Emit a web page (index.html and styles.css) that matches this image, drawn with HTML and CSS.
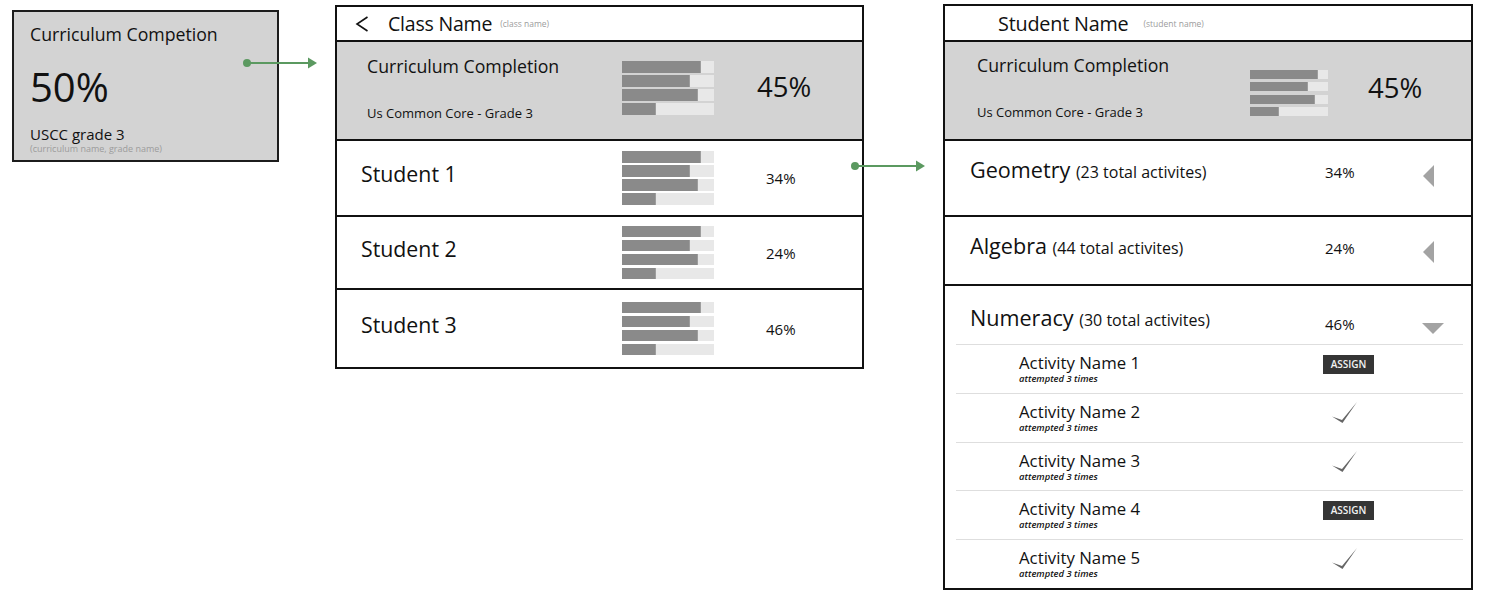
FILE: index.html
```html
<!DOCTYPE html>
<html lang="en">
<head>
<meta charset="utf-8">
<title>Curriculum Completion</title>
<link rel="stylesheet" href="styles.css">
</head>
<body>
<main class="board">

  <section class="summary-card">
    <h2 class="summary-card__title">Curriculum Competion</h2>
    <div class="summary-card__value">50%</div>
    <div class="summary-card__name">USCC grade 3</div>
    <div class="hint hint--card">(curriculum name, grade name)</div>
  </section>

  <section class="panel panel--class">
    <header class="panel__head panel__head--class">
      <svg class="back" width="14" height="16" viewBox="0 0 14 16" aria-hidden="true">
        <polyline points="12.5,1 2,8 12.5,15" fill="none" stroke="#111" stroke-width="1.6"/>
      </svg>
      <span class="panel__title">Class Name</span>
      <span class="hint">(class name)</span>
    </header>

    <div class="overview overview--class">
      <div class="overview__text">
        <div class="overview__title">Curriculum Completion</div>
        <div class="overview__sub">Us Common Core - Grade 3</div>
      </div>
      <div class="bars">
        <div class="bars__track"><div class="bars__fill" style="width:86%"></div></div>
        <div class="bars__track"><div class="bars__fill" style="width:74%"></div></div>
        <div class="bars__track"><div class="bars__fill" style="width:83%"></div></div>
        <div class="bars__track"><div class="bars__fill" style="width:37%"></div></div>
      </div>
      <div class="overview__pct">45%</div>
    </div>

    <div class="student">
      <div class="student__name">Student 1</div>
      <div class="bars">
        <div class="bars__track"><div class="bars__fill" style="width:86%"></div></div>
        <div class="bars__track"><div class="bars__fill" style="width:74%"></div></div>
        <div class="bars__track"><div class="bars__fill" style="width:83%"></div></div>
        <div class="bars__track"><div class="bars__fill" style="width:37%"></div></div>
      </div>
      <div class="student__pct">34%</div>
    </div>

    <div class="student">
      <div class="student__name">Student 2</div>
      <div class="bars">
        <div class="bars__track"><div class="bars__fill" style="width:86%"></div></div>
        <div class="bars__track"><div class="bars__fill" style="width:74%"></div></div>
        <div class="bars__track"><div class="bars__fill" style="width:83%"></div></div>
        <div class="bars__track"><div class="bars__fill" style="width:37%"></div></div>
      </div>
      <div class="student__pct">24%</div>
    </div>

    <div class="student">
      <div class="student__name">Student 3</div>
      <div class="bars">
        <div class="bars__track"><div class="bars__fill" style="width:86%"></div></div>
        <div class="bars__track"><div class="bars__fill" style="width:74%"></div></div>
        <div class="bars__track"><div class="bars__fill" style="width:83%"></div></div>
        <div class="bars__track"><div class="bars__fill" style="width:37%"></div></div>
      </div>
      <div class="student__pct">46%</div>
    </div>
  </section>

  <section class="panel panel--student">
    <header class="panel__head panel__head--student">
      <span class="panel__title">Student Name</span>
      <span class="hint">(student name)</span>
    </header>

    <div class="overview overview--student">
      <div class="overview__text">
        <div class="overview__title">Curriculum Completion</div>
        <div class="overview__sub">Us Common Core - Grade 3</div>
      </div>
      <div class="bars bars--small">
        <div class="bars__track"><div class="bars__fill" style="width:87%"></div></div>
        <div class="bars__track"><div class="bars__fill" style="width:74%"></div></div>
        <div class="bars__track"><div class="bars__fill" style="width:83%"></div></div>
        <div class="bars__track"><div class="bars__fill" style="width:37%"></div></div>
      </div>
      <div class="overview__pct">45%</div>
    </div>

    <div class="topic">
      <div class="topic__head">
        <div class="topic__name">Geometry <span class="topic__count">(23 total activites)</span></div>
        <div class="topic__pct">34%</div>
        <svg class="topic__toggle" width="11" height="22" viewBox="0 0 11 22" aria-hidden="true">
          <polygon points="11,0 11,22 0,11" fill="#a3a3a3"/>
        </svg>
      </div>
    </div>

    <div class="topic">
      <div class="topic__head">
        <div class="topic__name">Algebra <span class="topic__count">(44 total activites)</span></div>
        <div class="topic__pct">24%</div>
        <svg class="topic__toggle" width="11" height="22" viewBox="0 0 11 22" aria-hidden="true">
          <polygon points="11,0 11,22 0,11" fill="#a3a3a3"/>
        </svg>
      </div>
    </div>

    <div class="topic topic--open">
      <div class="topic__head">
        <div class="topic__name">Numeracy <span class="topic__count">(30 total activites)</span></div>
        <div class="topic__pct">46%</div>
        <svg class="topic__toggle" width="22" height="11" viewBox="0 0 22 11" aria-hidden="true">
          <polygon points="0,0 22,0 11,11" fill="#a3a3a3"/>
        </svg>
      </div>

      <ul class="activities">
        <li class="activity">
          <div>
            <div class="activity__name">Activity Name 1</div>
            <div class="activity__meta">attempted 3 times</div>
          </div>
          <button class="assign" type="button">ASSIGN</button>
        </li>
        <li class="activity">
          <div>
            <div class="activity__name">Activity Name 2</div>
            <div class="activity__meta">attempted 3 times</div>
          </div>
          <svg class="done" width="26" height="22" viewBox="0 0 26 22" aria-hidden="true">
            <path d="M0 14.5 L10 18 L25 0 L10.5 21 Z" fill="#666"/>
          </svg>
        </li>
        <li class="activity">
          <div>
            <div class="activity__name">Activity Name 3</div>
            <div class="activity__meta">attempted 3 times</div>
          </div>
          <svg class="done" width="26" height="22" viewBox="0 0 26 22" aria-hidden="true">
            <path d="M0 14.5 L10 18 L25 0 L10.5 21 Z" fill="#666"/>
          </svg>
        </li>
        <li class="activity">
          <div>
            <div class="activity__name">Activity Name 4</div>
            <div class="activity__meta">attempted 3 times</div>
          </div>
          <button class="assign" type="button">ASSIGN</button>
        </li>
        <li class="activity">
          <div>
            <div class="activity__name">Activity Name 5</div>
            <div class="activity__meta">attempted 3 times</div>
          </div>
          <svg class="done" width="26" height="22" viewBox="0 0 26 22" aria-hidden="true">
            <path d="M0 14.5 L10 18 L25 0 L10.5 21 Z" fill="#666"/>
          </svg>
        </li>
      </ul>
    </div>
  </section>

  <!-- flow connectors between screens -->
  <svg class="link link--card" width="80" height="14" viewBox="0 0 80 14" aria-hidden="true">
    <circle cx="7" cy="7" r="4" fill="#5b9960"/>
    <line x1="7" y1="7" x2="70" y2="7" stroke="#5b9960" stroke-width="2"/>
    <polygon points="68,1.5 77,7 68,12.5" fill="#5b9960"/>
  </svg>
  <svg class="link link--student" width="80" height="14" viewBox="0 0 80 14" aria-hidden="true">
    <circle cx="7" cy="7" r="4" fill="#5b9960"/>
    <line x1="7" y1="7" x2="70" y2="7" stroke="#5b9960" stroke-width="2"/>
    <polygon points="68,1.5 77,7 68,12.5" fill="#5b9960"/>
  </svg>
</main>
</body>
</html>
```

FILE: styles.css
```css
* {
  box-sizing: border-box;
  margin: 0;
  padding: 0;
}

body {
  font-family: "Open Sans", "Noto Sans", sans-serif;
  color: #111;
  background: #fff;
  width: 1488px;
  height: 603px;
  overflow: hidden;
}

.board {
  position: relative;
  display: flex;
  align-items: flex-start;
  height: 603px;
  padding-left: 12px;
}

.hint {
  font-size: 8.5px;
  color: #9c9c9c;
  white-space: nowrap;
}

/* ---------- dashboard tile ---------- */
.summary-card {
  width: 267px;
  height: 152px;
  margin-top: 10px;
  padding: 10px 0 0 16px;
  background: #d3d3d3;
  border: 2px solid #1c1c1c;
}

.summary-card__title {
  font-size: 17.7px;
  font-weight: 400;
  line-height: 24px;
}

.summary-card__value {
  font-size: 40px;
  line-height: 48px;
  margin-top: 17px;
}

.summary-card__name {
  font-size: 15px;
  line-height: 18px;
  margin-top: 14px;
}

.hint--card {
  font-size: 9px;
  line-height: 9px;
  margin-top: 1px;
}

/* ---------- panels ---------- */
.panel {
  display: flex;
  flex-direction: column;
  background: #fff;
  border: 2px solid #111;
}

.panel--class {
  width: 529px;
  height: 364px;
  margin: 5px 0 0 56px;
}

.panel--student {
  width: 530px;
  height: 586px;
  margin: 4px 0 0 79px;
}

.panel__head {
  display: flex;
  align-items: center;
  flex: none;
  border-bottom: 2px solid #111;
}

.panel__head--class {
  height: 35px;
  padding-left: 18px;
}

.panel__head--student {
  height: 36px;
  padding-left: 53px;
}

.back {
  flex: none;
  margin-right: 19px;
}

.panel__title {
  font-size: 19.5px;
  line-height: 33px;
  letter-spacing: -0.2px;
  margin-right: 8px;
}

.panel__head--student .panel__title {
  font-size: 19.8px;
  margin-right: 15px;
}

/* ---------- curriculum overview strip ---------- */
.overview {
  display: grid;
  align-items: start;
  flex: none;
  height: 99px;
  padding-top: 12px;
  background: #d3d3d3;
  border-bottom: 2px solid #111;
}

.overview--class {
  grid-template-columns: 285px 92px 1fr;
}

.overview--student {
  grid-template-columns: 305px 78px 1fr;
  padding-top: 11px;
}

.overview__text {
  padding-left: 30px;
}

.overview--student .overview__text {
  padding-left: 32px;
}

.overview__title {
  font-size: 17.7px;
  line-height: 24px;
}

.overview__sub {
  font-size: 13px;
  line-height: 18px;
  margin-top: 26px;
}

.overview__pct {
  font-size: 27.5px;
  line-height: 34px;
  margin-top: 16px;
  padding-left: 43px;
}

.overview--student .overview__pct {
  margin-top: 18px;
  padding-left: 40px;
}

/* ---------- progress bars ---------- */
.bars {
  display: flex;
  flex-direction: column;
  gap: 2.5px;
  margin-top: 7px;
}

.bars__track {
  height: 11.5px;
  background: #e8e8e8;
}

.bars__fill {
  height: 100%;
  background: #8a8a8a;
  border-right: 1px solid #9d9d9d;
}

.bars--small {
  gap: 3.3px;
  margin-top: 17px;
}

.bars--small .bars__track {
  height: 9px;
}

/* ---------- student rows ---------- */
.student {
  display: grid;
  grid-template-columns: 285px 92px 1fr;
  align-items: center;
  flex: none;
  border-bottom: 2px solid #111;
}

.student:nth-child(3) {
  height: 76px;
}

.student:nth-child(4) {
  height: 73px;
}

.student:nth-child(5) {
  flex: 1;
  border-bottom: 0;
}

.student__name {
  padding-left: 24px;
  padding-bottom: 8px;
  font-size: 21.3px;
  line-height: 28px;
}

.student__pct {
  padding-left: 52px;
  font-size: 15px;
  line-height: 20px;
}

.student .bars {
  margin-top: 0;
}

/* ---------- topics ---------- */
.topic {
  flex: none;
  border-bottom: 2px solid #111;
}

.topic:nth-child(3) {
  height: 76px;
}

.topic:nth-child(4) {
  height: 69px;
}

.topic--open {
  flex: 1;
  display: flex;
  flex-direction: column;
  border-bottom: 0;
}

.topic__head {
  display: grid;
  grid-template-columns: 380px 96px 1fr;
  align-items: start;
  padding-top: 15px;
}

.topic--open .topic__head {
  height: 58px;
  padding-top: 18px;
}

.topic__name {
  padding-left: 25px;
  font-size: 21.6px;
  line-height: 28px;
  white-space: nowrap;
}

.topic__count {
  font-size: 16px;
}

.topic__pct {
  font-size: 15px;
  line-height: 20px;
  margin-top: 6px;
}

.topic--open .topic__pct {
  margin-top: 10px;
}

.topic__toggle {
  display: block;
  margin: 9px 0 0 2px;
}

.topic--open .topic__toggle {
  margin: 19px 0 0 1px;
}

/* ---------- activities ---------- */
.activities {
  list-style: none;
  flex: 1;
  display: flex;
  flex-direction: column;
  margin: 0 8px 0 11px;
  border-top: 1px solid #dedede;
}

.activity {
  flex: 1;
  display: grid;
  grid-template-columns: 305px 1fr;
  align-items: start;
  padding: 8px 0 0 62px;
}

.activity + .activity {
  border-top: 1px solid #dedede;
}

.activity__name {
  padding-left: 1px;
  font-size: 16.8px;
  line-height: 20px;
}

.activity__meta {
  padding-left: 1px;
  font-size: 9.4px;
  line-height: 11px;
  font-style: italic;
  font-weight: 600;
}

.assign {
  justify-self: start;
  width: 51px;
  height: 19px;
  margin-top: 2px;
  border: 0;
  background: #353535;
  color: #f2f2f2;
  font-family: inherit;
  font-size: 10px;
  font-weight: 600;
  line-height: 19px;
}

.done {
  display: block;
  margin-left: 9px;
}

/* ---------- connectors ---------- */
.link {
  position: absolute;
}

.link--card {
  left: 240px;
  top: 56px;
}

.link--student {
  left: 848px;
  top: 159px;
}
```
